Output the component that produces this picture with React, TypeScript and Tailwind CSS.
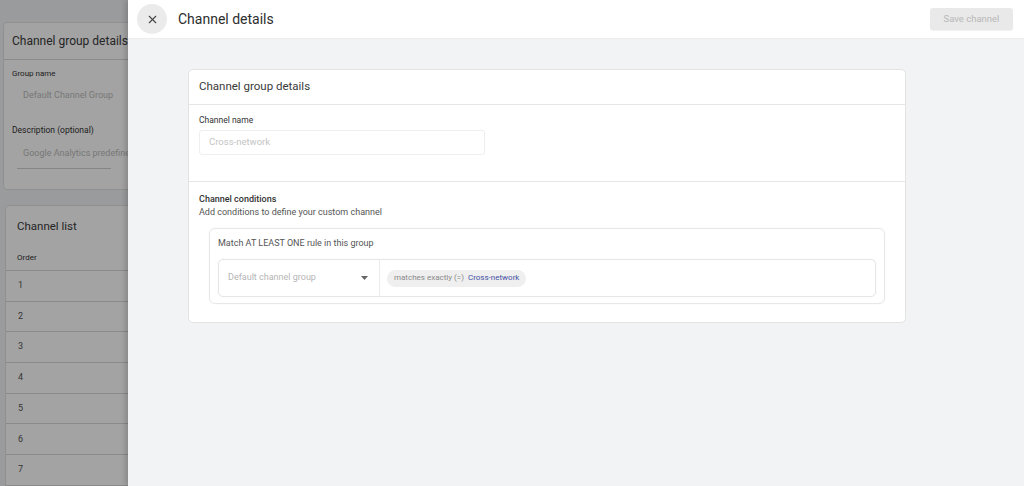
import { X } from 'lucide-react'

const font = { fontFamily: 'Roboto, "Open Sans", Arial, sans-serif' }

function ListRow({ n }: { n: number }) {
  return (
    <div className="h-[30.7px] flex items-center px-[12px] border-b border-[#d8d8d8] text-[9px] text-[#555]">
      {n}
    </div>
  )
}

// underlying page, dimmed by the scrim
function BackgroundPage() {
  return (
    <div className="h-full w-full bg-[#f1f3f4] pt-[22px]">
      <div className="ml-[3px] w-[400px] h-[168px] bg-white rounded-[4px] border border-[#e2e2e2]">
        <div className="h-[37px] flex items-center px-[8px] border-b border-[#d8d8d8] text-[12px] text-[#3a3a3a]">
          Channel group details
        </div>
        <div className="px-[8px] pt-[8px]">
          <p className="text-[8px] text-[#333]">Group name</p>
          <p className="mt-[9px] pl-[11px] text-[9px] text-[#bbb]">Default Channel Group</p>
          <p className="mt-[21px] text-[8.5px] text-[#333]">Description (optional)</p>
          <p className="mt-[11px] pl-[11px] text-[9px] text-[#bbb]">Google Analytics predefined channel group</p>
          <div className="mt-[7px] ml-[5px] w-[94px] border-b border-[#d0d0d0]" />
        </div>
      </div>
      <div className="ml-[5px] mt-[15px] w-[400px] h-[320px] bg-white rounded-[4px] border border-[#e2e2e2]">
        <div className="h-[40px] flex items-center px-[11px] text-[11.5px] text-[#3a3a3a] pt-[2px]">Channel list</div>
        <div className="h-[25px] flex items-center px-[11px] border-b border-[#d8d8d8] text-[8px] text-[#333]">Order</div>
        {[1, 2, 3, 4, 5, 6, 7].map(n => <ListRow key={n} n={n} />)}
      </div>
    </div>
  )
}

export default function App() {
  return (
    <div className="relative w-[1024px] h-[486px] overflow-hidden" style={font}>
      <BackgroundPage />
      <div className="absolute inset-0 bg-black/[0.36]" />

      {/* Drawer */}
      <div className="absolute left-[128px] top-0 right-0 bottom-0 bg-[#f1f3f4] flex flex-col shadow-[-2px_0_6px_rgba(0,0,0,0.2)]">
        <div className="h-[39px] bg-white flex items-center border-b border-[#ececec] shrink-0">
          <button className="ml-[9px] w-[30px] h-[30px] rounded-full bg-[#ebebeb] grid place-items-center text-[#444]">
            <X className="size-[13px]" strokeWidth={2} />
          </button>
          <h1 className="ml-[11px] text-[14px] text-[#2d2d2d]">Channel details</h1>
          <button className="ml-auto mr-[11px] w-[83px] h-[22px] rounded-[3px] bg-[#e9e9e9] text-[9.5px] text-[#b8b8b8] shadow-[0_1px_1px_rgba(0,0,0,0.06)]">
            Save channel
          </button>
        </div>

        <div className="pl-[60px] pt-[30px]">
          <div className="w-[718px] bg-white rounded-[5px] border border-[#e3e3e3]">
            <div className="h-[35px] flex items-center px-[10px] border-b border-[#e6e6e6] text-[11.5px] text-[#3a3a3a]">
              Channel group details
            </div>
            <div className="px-[10px] pt-[10px] pb-[26px] border-b border-[#e6e6e6]">
              <p className="text-[8.5px] text-[#333] leading-[10px]">Channel name</p>
              <div className="mt-[5px] w-[286px] h-[25px] rounded-[3px] border border-[#eeeeee] flex items-center px-[9px] text-[9.5px] text-[#c4c4c4]">
                Cross-network
              </div>
            </div>
            <div className="pt-[12px] pb-[18px]">
              <p className="px-[10px] text-[9px] font-medium text-[#333] leading-[11px]">Channel conditions</p>
              <p className="px-[10px] mt-[2px] text-[9px] text-[#555] leading-[11px]">Add conditions to define your custom channel</p>
              <div className="mt-[10px] mx-[20px] rounded-[6px] border border-[#e7e7e7] shadow-[0_0_2px_rgba(0,0,0,0.06)] px-[8px] pt-[8px] pb-[6px]">
                <p className="text-[9px] text-[#555] leading-[12px]">Match AT LEAST ONE rule in this group</p>
                <div className="mt-[10px] h-[38px] flex rounded-[5px] border border-[#e6e6e6] shadow-[0_0_2px_rgba(0,0,0,0.05)]">
                  <div className="w-[161px] flex items-center pl-[9px] pr-[11px] border-r border-[#ececec]">
                    <span className="text-[9px] text-[#b5b5b5]">Default channel group</span>
                    <svg className="ml-auto" width="7" height="4" viewBox="0 0 7 4">
                      <path d="M0 0h7L3.5 4z" fill="#666" />
                    </svg>
                  </div>
                  <div className="flex items-center pl-[7px]">
                    <span className="h-[17px] rounded-full bg-[#efefef] flex items-center px-[7px] gap-[4px] text-[8px]">
                      <span className="text-[#8a8a8a]">matches exactly (=)</span>
                      <span className="text-[#4451a3]">Cross-network</span>
                    </span>
                  </div>
                </div>
              </div>
            </div>
          </div>
        </div>
      </div>
    </div>
  )
}
